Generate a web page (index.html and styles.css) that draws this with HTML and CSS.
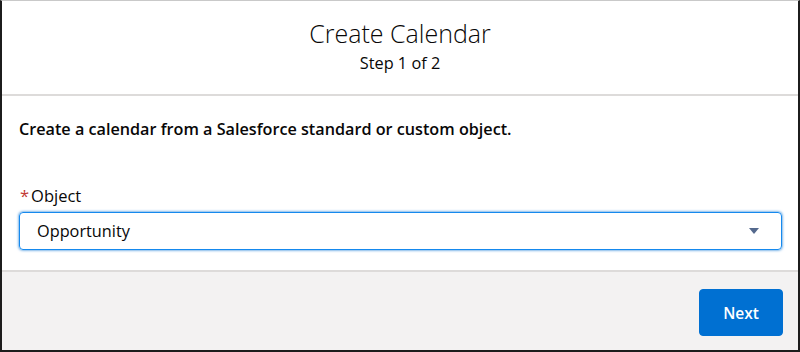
FILE: index.html
```html
<!DOCTYPE html>
<html lang="en">

<head>
    <meta charset="UTF-8">
    <meta name="viewport" content="width=device-width, initial-scale=1.0">
    <title>Create Calendar</title>
    <link rel="stylesheet" href="styles.css">
</head>

<body>
    <div class="modal">
        <div class="cabecera">
            <h1 class="titulo">Create Calendar</h1>
            <p class="paso">Step 1 of 2</p>
        </div>

        <div class="contenido">
            <p class="intro">Create a calendar from a Salesforce standard or custom object.</p>

            <label class="etiqueta" for="f_objeto"><abbr class="requerido">*</abbr>Object</label>
            <div class="selector" id="f_objeto">
                <span>Opportunity</span>
                <svg class="flecha" width="10" height="6" viewBox="0 0 10 6">
                    <path d="M0 0 H10 L5 6 Z" fill="#54698d" />
                </svg>
            </div>
        </div>

        <div class="pie">
            <button class="boton" type="button">Next</button>
        </div>
    </div>
</body>

</html>
```

FILE: styles.css
```css
body {
    margin: 0;
    background-color: #ffffff;
}

.modal {
    width: 800px;
    height: 352px;
    box-sizing: border-box;
    border: 2px solid #1c1c1c;
    border-top: 1px solid #c9c9c9;
    display: flex;
    flex-direction: column;
    font-family: "Open Sans", "Liberation Sans", sans-serif;
    color: #080707;
}

.cabecera {
    height: 95px;
    box-sizing: border-box;
    padding-top: 14px;
    text-align: center;
    border-bottom: 2px solid #dddbda;
}

.titulo {
    margin: 0;
    font-size: 25px;
    font-weight: 300;
    line-height: 36px;
}

.paso {
    margin: 1px 0 0;
    font-size: 16.3px;
    line-height: 22px;
}

.contenido {
    height: 176px;
    box-sizing: border-box;
    padding: 21px 16px 0 17px;
    border-bottom: 2px solid #dddbda;
}

.intro {
    margin: 0;
    font-size: 16.2px;
    font-weight: 600;
    line-height: 24px;
}

.etiqueta {
    display: block;
    margin-top: 44px;
    font-size: 16.5px;
    line-height: 22px;
}

.requerido {
    color: #c23934;
    text-decoration: none;
    margin: 0 2px 0 1px;
}

.selector {
    margin-top: 5px;
    height: 38px;
    box-sizing: border-box;
    display: flex;
    justify-content: space-between;
    align-items: center;
    padding: 0 22px 0 17px;
    border: 1px solid #1589ee;
    border-radius: 4px;
    box-shadow: 0 0 3px #0070d2;
    font-size: 16.3px;
}

.pie {
    flex: 1;
    display: flex;
    justify-content: flex-end;
    align-items: center;
    padding-right: 15px;
    background-color: #f3f2f2;
}

.boton {
    width: 84px;
    height: 47px;
    margin-top: 3px;
    border: 1px solid #0070d2;
    border-radius: 4px;
    background-color: #0070d2;
    color: #ffffff;
    font-family: "Open Sans", "Liberation Sans", sans-serif;
    font-size: 15.5px;
    font-weight: 600;
}
```
